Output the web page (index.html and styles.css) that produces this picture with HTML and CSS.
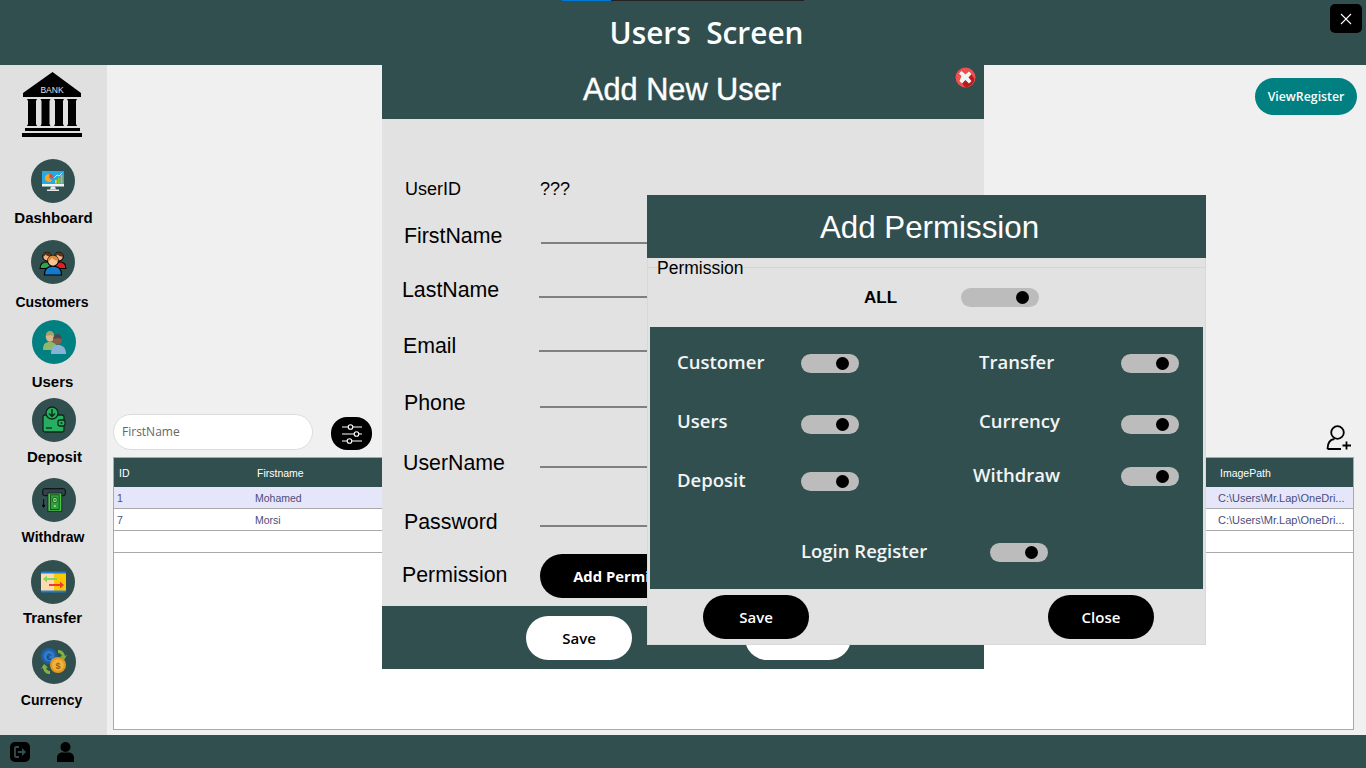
FILE: index.html
```html
<!DOCTYPE html>
<html lang="en">
<head>
<meta charset="utf-8">
<title>Users Screen</title>
<link rel="stylesheet" href="styles.css">
</head>
<body>
<div class="app">
  <header class="topbar">
    <div class="progress"><span class="progress-fill"></span></div>
    <h1 class="screen-title">Users&nbsp; Screen</h1>
    <button class="close-app" aria-label="Close">
      <svg width="12" height="12" viewBox="0 0 12 12"><path d="M1 1 11 11M11 1 1 11" stroke="#fff" stroke-width="1.1"/></svg>
    </button>
  </header>
  <div class="middle">
    <nav class="sidebar">
      <svg class="logo" width="62" height="66" viewBox="0 0 62 66">
        <path d="M30.500 0 59 21V25H1V21Z" fill="#000"/>
        <path d="M5 27h10l-1 2V52l1 2H5l1-2V29z" fill="#000"/>
        <path d="M18.500 27h10l-1 2V52l1 2h-10l1-2V29z" fill="#000"/>
        <path d="M32 27h10l-1 2V52l1 2H32l1-2V29z" fill="#000"/>
        <path d="M45 27h10l-1 2V52l1 2H45l1-2V29z" fill="#000"/>
        <rect x="3" y="56" width="55" height="3" fill="#000"/><rect y="61" width="60" height="4" fill="#000"/>
        <text x="30" y="21" class="logo-text" text-anchor="middle">BANK</text>
      </svg>
      <a class="nav-item nav-dashboard">
        <span class="nav-circle">
          <svg width="24" height="24" viewBox="0 0 24 24"><rect x="1" y="2" width="22" height="15" fill="#29a9e1"/><rect x="1" y="15" width="22" height="2.500" fill="#eef3f5"/><path d="M10 17.500h4l1 3h-6z" fill="#e8e8e8"/><rect x="6" y="20.500" width="12" height="1.500" fill="#e8e8e8"/><path d="M8 5a4 4 0 1 0 3 6.500L8 9z" fill="#f5a623"/><path d="M9 4.500a4 4 0 0 1 3 5l-3-.8z" fill="#e24b3a"/><rect x="14" y="11" width="1.800" height="3.500" fill="#f4d03f"/><rect x="16.800" y="9" width="1.800" height="5.500" fill="#7ed321"/><rect x="19.600" y="6" width="1.800" height="8.500" fill="#f5a623"/><path d="M13 9 16 6l2 1 3-3" stroke="#eaf6fb" fill="none" stroke-width=".8"/></svg>
        </span>
        <span class="nav-label">Dashboard</span>
      </a>
      <a class="nav-item nav-customers">
        <span class="nav-circle">
          <svg width="28" height="28" viewBox="0 0 26 26"><path d="M1 19c0-5 3-6 6-6s5 2 5 6z" fill="#2ea44f" stroke="#000"/><path d="M14 19c0-4 2-6 5-6s6 1 6 6z" fill="#e02020" stroke="#000"/><circle cx="7.500" cy="8" r="4" fill="#f0b184" stroke="#000"/><path d="M3.500 8a4 4 0 0 1 8 0c-2 0-5-1-5-2-1 1-2 2-3 2z" fill="#5c3317"/><circle cx="18.500" cy="8" r="4" fill="#f0b184" stroke="#000"/><path d="M14.500 8a4 4 0 0 1 8 0c-2 0-5-1-5-2-1 1-2 2-3 2z" fill="#5c3317"/><path d="M5 25c0-6 3-8 8-8s8 2 8 8z" fill="#1479c9" stroke="#000"/><circle cx="13" cy="12" r="5" fill="#f7c39a" stroke="#000"/><path d="M8 12a5 5 0 0 1 10 0c-2-.500-5-1-6-3-1 1.500-2 3-4 3z" fill="#d98a3a"/></svg>
        </span>
        <span class="nav-label">Customers</span>
      </a>
      <a class="nav-item nav-users">
        <span class="nav-circle nav-circle-active">
          <svg width="26" height="26" viewBox="0 0 26 26"><path d="M2 21c0-6 2-8 7-8s7 2 7 8z" fill="#8fb86a"/><ellipse cx="9" cy="7.500" rx="4.200" ry="5.200" fill="#d9b48c"/><path d="M4.800 7c0-3 2-5 4.200-5s4.200 2 4.200 5c-2-1-6-1-8.400 0z" fill="#a5a265"/><path d="M10 25c0-7 3-9 7-9s8 2 8 9z" fill="#86b3d6"/><ellipse cx="16.500" cy="10.500" rx="4.300" ry="5.300" fill="#8a5f45"/><path d="M12.200 10c0-3 2-5 4.300-5s4.300 2 4.300 5c-2-1-6.500-1-8.600 0z" fill="#4a4a4a"/></svg>
        </span>
        <span class="nav-label">Users</span>
      </a>
      <a class="nav-item nav-deposit">
        <span class="nav-circle">
          <svg width="24" height="28" viewBox="0 0 24 28"><rect x="1" y="9" width="21" height="17" rx="2" fill="#27ae60" stroke="#0b2a18" stroke-width="1.300"/><circle cx="10" cy="7" r="6" fill="#27ae60" stroke="#0b2a18" stroke-width="1.300"/><path d="M10 3v7M7 7.500l3 3 3-3" fill="none" stroke="#0b2a18" stroke-width="1.400"/><rect x="16" y="14" width="7" height="6" rx="2" fill="#27ae60" stroke="#0b2a18" stroke-width="1.300"/><circle cx="19.500" cy="17" r="1" fill="#0b2a18"/><path d="M4 22h6" stroke="#0b2a18" stroke-width="1.300"/></svg>
        </span>
        <span class="nav-label">Deposit</span>
      </a>
      <a class="nav-item nav-withdraw">
        <span class="nav-circle">
          <svg width="28" height="26" viewBox="0 0 28 30"><rect x="1" y="2" width="26" height="8" rx="2" fill="#33414a" stroke="#000"/><rect x="7" y="7" width="16" height="21" fill="#49c749" stroke="#0b2a18"/><rect x="10" y="9" width="10" height="17" fill="#2f9e3f" stroke="#0b2a18" stroke-width=".8"/><circle cx="15" cy="15" r="3" fill="#8ee86c" stroke="#0b2a18" stroke-width=".8"/><path d="M13.500 15h3" stroke="#0b2a18"/><circle cx="15" cy="22" r="1.300" fill="#8ee86c"/><path d="M2 14v9M0.500 21 2 23.500 3.500 21z" stroke="#000" fill="#000"/></svg>
        </span>
        <span class="nav-label">Withdraw</span>
      </a>
      <a class="nav-item nav-transfer">
        <span class="nav-circle">
          <svg width="26" height="24" viewBox="0 0 26 22"><rect x="1" y="0.500" width="15" height="21" rx="1" fill="#1f7fd1"/><rect x="1" y="2.500" width="15" height="17" fill="#ffd9b0"/><rect x="14" y="0.500" width="12" height="21" rx="1" fill="#1f7fd1"/><rect x="14" y="2.500" width="12" height="17" fill="#ffc800"/><path d="M17 7H7V4.500L3 8l4 3.500V9h10z" fill="#7ed957"/><path d="M9 13h11v-2.500l4 3.500-4 3.500V15H9z" fill="#f03a2e"/></svg>
        </span>
        <span class="nav-label">Transfer</span>
      </a>
      <a class="nav-item nav-currency">
        <span class="nav-circle">
          <svg width="30" height="30" viewBox="0 0 30 30"><path d="M19 3c4 0 6 2 7 6l2-1-3 5-4-3.500 2-.5c-1-2-2-3-4-3z" fill="#7cb342"/><path d="M11 27c-4 0-6-2-7-6l-2 1 3-5 4 3.500-2 .5c1 2 2 3 4 3z" fill="#7cb342"/><circle cx="10" cy="9" r="8" fill="#1f5fa8"/><circle cx="10" cy="9" r="5.500" fill="#2f7ac9"/><text x="10" y="12.500" class="coin-text coin-blue" text-anchor="middle">€</text><circle cx="19" cy="18" r="8" fill="#e09a1f"/><circle cx="19" cy="18" r="5.800" fill="#f3b23a"/><text x="19" y="21.500" class="coin-text coin-brown" text-anchor="middle">$</text></svg>
        </span>
        <span class="nav-label">Currency</span>
      </a>
    </nav>
    <main class="content">
      <div class="content-top">
        <button class="view-register">ViewRegister</button>
      </div>
      <div class="toolbar">
        <div class="search">FirstName</div>
        <button class="filter" aria-label="Filter">
          <svg width="22" height="22" viewBox="0 0 22 22" fill="none" stroke="#fff" stroke-width="1.100"><path d="M1 4h6M12 4h9M1 11h12M18 11h3M1 18h5M11 18h10"/><circle cx="9.500" cy="4" r="2.300"/><circle cx="15.500" cy="11" r="2.300"/><circle cx="8.500" cy="18" r="2.300"/></svg>
        </button>
        <svg class="add-user" width="26" height="26" viewBox="0 0 26 26" fill="none" stroke="#000" stroke-width="1.800"><circle cx="11.500" cy="7.500" r="6.300"/><path d="M1.500 24c0-6 3-9.500 7-10M1.500 24H15M20.500 16.500v8M16.500 20.500h8.500"/></svg>
      </div>
      <div class="grid">
        <div class="grid-row grid-head"><span class="col-id">ID</span><span class="col-first">Firstname</span><span class="col-path">ImagePath</span></div>
        <div class="grid-row grid-selected"><span class="col-id">1</span><span class="col-first">Mohamed</span><span class="col-path">C:\Users\Mr.Lap\OneDri...</span></div>
        <div class="grid-row"><span class="col-id">7</span><span class="col-first">Morsi</span><span class="col-path">C:\Users\Mr.Lap\OneDri...</span></div>
        <div class="grid-row"></div>
      </div>
    </main>
  </div>
  <footer class="bottombar">
    <span class="logout">
      <svg width="20" height="20" viewBox="0 0 20 20"><rect width="20" height="20" rx="5" fill="#000"/><path d="M9 5H6a1 1 0 0 0-1 1v8a1 1 0 0 0 1 1h3" fill="none" stroke="#324f4f" stroke-width="1.800"/><path d="M8 9h4V6l4 4-4 4v-3H8z" fill="#324f4f"/></svg>
    </span>
    <svg class="person" width="17" height="20" viewBox="0 0 17 20"><circle cx="8.500" cy="5" r="5" fill="#000"/><path d="M0 20v-4c0-4 3-5.500 5-5.500h7c2 0 5 1.500 5 5.500v4z" fill="#000"/></svg>
  </footer>

  <section class="modal user-modal">
    <div class="user-head">
      <h2 class="modal-title user-title">Add New User</h2>
      <svg class="modal-x" width="21" height="21" viewBox="0 0 21 21"><circle cx="10.500" cy="10.500" r="10" fill="#ee4f4f"/><path d="M6 15 15.500 6l4 6a10 10 0 0 1-9 8.500z" fill="#b71c1c"/><path d="M6.500 9 4 6.500l2.500-2.500L10.500 7.500 14 4.500l2.500 2.500-3 3.500 3 3.500-2.500 2.500-3.500-3.500-3.500 3.500-2.500-2.500z" fill="#f4f4f4"/></svg>
    </div>
    <div class="user-body">
      <div class="form-row row-id"><span class="label-small">UserID</span><span class="value">???</span></div>
      <div class="form-row row-first"><span class="label">FirstName</span><span class="field"></span></div>
      <div class="form-row row-last"><span class="label">LastName</span><span class="field"></span></div>
      <div class="form-row row-email"><span class="label">Email</span><span class="field"></span></div>
      <div class="form-row row-phone"><span class="label">Phone</span><span class="field"></span></div>
      <div class="form-row row-username"><span class="label">UserName</span><span class="field"></span></div>
      <div class="form-row row-password"><span class="label">Password</span><span class="field"></span></div>
      <div class="form-row row-perm"><span class="label">Permission</span><button class="pill pill-black pill-perm">Add Permission</button></div>
    </div>
    <div class="user-foot">
      <button class="pill pill-white">Save</button>
      <button class="pill pill-white">Close</button>
    </div>
  </section>

  <section class="modal perm-modal">
    <div class="perm-head"><h2 class="modal-title">Add Permission</h2></div>
    <div class="perm-group">
      <span class="group-legend">Permission</span>
      <div class="all-row"><span class="all-label">ALL</span><span class="toggle toggle-wide"><i class="knob"></i></span></div>
      <div class="perm-panel">
        <div class="perm-item item-left"><span class="perm-label">Customer</span><span class="toggle"><i class="knob"></i></span></div>
        <div class="perm-item item-right"><span class="perm-label">Transfer</span><span class="toggle"><i class="knob"></i></span></div>
        <div class="perm-item item-left item-up"><span class="perm-label">Users</span><span class="toggle"><i class="knob"></i></span></div>
        <div class="perm-item item-right item-up"><span class="perm-label">Currency</span><span class="toggle"><i class="knob"></i></span></div>
        <div class="perm-item item-left"><span class="perm-label">Deposit</span><span class="toggle"><i class="knob"></i></span></div>
        <div class="perm-item item-right item-withdraw"><span class="perm-label">Withdraw</span><span class="toggle"><i class="knob"></i></span></div>
        <div class="perm-item item-login"><span class="perm-label">Login Register</span><span class="toggle"><i class="knob"></i></span></div>
      </div>
      <div class="perm-foot">
        <button class="pill pill-black">Save</button>
        <button class="pill pill-black">Close</button>
      </div>
    </div>
  </section>
</div>
</body>
</html>
```

FILE: styles.css
```css
* { box-sizing: border-box; }
html, body { margin: 0; padding: 0; }
body { width: 1366px; height: 768px; overflow: hidden; font-family: "Liberation Sans", Arial, sans-serif; background: #f0f0f0; }
button { border: 0; padding: 0; font: inherit; }
h1, h2 { margin: 0; }

.app { position: relative; width: 1366px; height: 768px; display: flex; flex-direction: column; }

.topbar { height: 65px; background: #324f4f; display: flex; justify-content: center; flex: none; position: relative; padding-left: 47px; }
.progress { position: absolute; left: 562px; top: 0; width: 242px; height: 1px; background: #222; }
.progress-fill { display: block; width: 49px; height: 1px; background: #0078d7; }
.screen-title { font: 600 29.800px/65px "Open Sans", "Noto Sans", sans-serif; color: #fff; }
.close-app { position: absolute; left: 1330px; top: 4px; width: 32px; height: 29px; border-radius: 5px; background: #000; display: flex; align-items: center; justify-content: center; }

.middle { flex: 1; display: flex; min-height: 0; }

.sidebar { width: 107px; flex: none; background: #e0e0e0; display: flex; flex-direction: column; align-items: center; }
.logo { margin-top: 7px; margin-left: -1px; flex: none; }
.logo-text { font: 8.500px "Liberation Sans", sans-serif; fill: #e0e0e0; }
.nav-item { display: flex; flex-direction: column; align-items: center; }
.nav-circle { width: 44px; height: 44px; border-radius: 50%; background: #324f4f; display: flex; align-items: center; justify-content: center; flex: none; }
.nav-circle-active { background: #008080; }
.nav-label { font: 700 15px/17px "Liberation Sans", sans-serif; color: #000; white-space: nowrap; }
.coin-text { font: 700 9px "Liberation Sans", sans-serif; }
.coin-blue { fill: #17467d; }
.coin-brown { fill: #9a5f10; }

.nav-dashboard { margin-top: 21px; }
.nav-dashboard .nav-label { margin-top: 6px; }
.nav-customers { margin-top: 14px; margin-left: -3px; }
.nav-customers .nav-circle { margin-left: 3px; }
.nav-customers .nav-label { margin-top: 10px; font-size: 14px; }
.nav-users { margin-top: 9px; margin-left: -2px; }
.nav-users .nav-circle { margin-left: 2px; }
.nav-users .nav-label { margin-top: 9px; }
.nav-deposit { margin-top: 8px; margin-left: 2px; }
.nav-deposit .nav-label { margin-top: 6px; }
.nav-withdraw { margin-top: 13px; margin-left: -1px; }
.nav-withdraw .nav-circle { margin-left: 1px; }
.nav-withdraw .nav-label { margin-top: 7px; font-size: 14px; }
.nav-transfer { margin-top: 14px; margin-left: -2px; }
.nav-transfer .nav-circle { margin-left: 2px; }
.nav-transfer .nav-label { margin-top: 5px; }
.nav-currency { margin-top: 14px; margin-left: -4px; }
.nav-currency .nav-circle { margin-left: 4px; }
.nav-currency .nav-label { margin-top: 8px; font-size: 14px; }

.content { flex: 1; display: flex; flex-direction: column; padding: 0 12px 5px 6px; min-width: 0; }
.content-top { height: 349px; display: flex; justify-content: flex-end; align-items: flex-start; padding-top: 13px; flex: none; }
.view-register { width: 102px; height: 37px; margin-right: -3px; border-radius: 19px; background: #008080; color: #fff; font: 600 12.300px "Open Sans", "Noto Sans", sans-serif; }
.toolbar { height: 43px; display: flex; align-items: flex-start; flex: none; }
.search { width: 200px; height: 36px; border: 1px solid #dcdcdc; border-radius: 18px; background: #fff; color: #666; font: 12px/34px "Open Sans", "Noto Sans", sans-serif; padding-left: 8px; }
.filter { width: 41px; height: 33px; margin: 3px 0 0 18px; border-radius: 16px; background: #000; display: flex; align-items: center; justify-content: center; }
.add-user { margin: 11px 2px 0 auto; }

.grid { flex: 1; border: 1px solid #a9a9a9; background: #fff; min-height: 0; }
.grid-row { height: 22px; border-bottom: 1px solid #a9a9a9; font: 10.500px/23px "Liberation Sans", sans-serif; color: #4c4c7a; display: flex; }
.grid-head { height: 29px; background: #324f4f; color: #fff; border: 0; line-height: 30px; }
.grid-selected { background: #e6e6fa; }
.col-id { width: 141px; padding-left: 3px; }
.grid-head .col-id { padding-left: 5px; }
.grid-head .col-first { padding-left: 2px; }
.col-first { flex: 1; }
.col-path { width: 135px; font-size: 11px; white-space: nowrap; }
.grid-head .col-path { padding-left: 2px; font-size: 10.500px; }

.bottombar { height: 33px; background: #324f4f; flex: none; display: flex; align-items: center; padding-left: 10px; }
.logout { display: flex; }
.person { margin-left: 27px; }

.modal { position: absolute; display: flex; flex-direction: column; }
.modal-title { font: 400 31.300px "Liberation Sans", sans-serif; color: #fff; text-align: center; }
.user-title { font-size: 30.700px; -webkit-text-stroke: .4px #fff; }

.user-modal { left: 382px; top: 65px; width: 602px; height: 604px; background: #e2e2e2; }
.user-head { height: 54px; flex: none; background: #324f4f; position: relative; display: flex; align-items: center; justify-content: center; padding: 0 2px 4px 0; }
.modal-x { position: absolute; right: 8px; top: 2px; }
.user-body { flex: 1; display: flex; flex-direction: column; min-height: 0; overflow: hidden; }
.form-row { display: flex; flex: none; align-items: flex-start; }
.label { font: 21.330px/26px "Liberation Sans", sans-serif; color: #000; white-space: nowrap; }
.label-small { font: 18px/20px "Liberation Sans", sans-serif; color: #000; width: 135px; }
.value { font: 18px/20px "Liberation Sans", sans-serif; color: #000; }
.field { height: 2px; background: #808080; width: 420px; position: absolute; left: 159px; margin-top: 19px; }
.row-id { margin: 60px 0 0 23px; }
.row-first { margin: 24px 0 0 22px; height: 24px; }
.row-last { margin: 30px 0 0 20px; height: 24px; }
.row-email { margin: 32px 0 0 21px; height: 24px; }
.row-phone { margin: 33px 0 0 22px; height: 24px; }
.row-username { margin: 36px 0 0 21px; height: 24px; }
.row-password { margin: 35px 0 0 22px; height: 24px; }
.row-perm { margin: 21px 0 0 20px; align-items: center; }
.row-perm .label { margin-top: -3px; }
.row-last .field, .row-email .field { left: 157px; }
.row-email .field { margin-top: 17px; }
.row-phone .field { left: 158px; margin-top: 16px; }
.row-username .field { left: 158px; margin-top: 16px; }
.row-password .field { left: 158px; margin-top: 16px; }
.pill { width: 106px; height: 44px; border-radius: 22px; font: 600 15px "Open Sans", "Noto Sans", sans-serif; flex: none; }
.pill-black { background: #000; color: #fff; }
.pill-white { background: #fff; color: #000; }
.pill-perm { width: 182px; margin-left: 32px; font: 700 14.800px "Open Sans", "Noto Sans", sans-serif; }
.user-foot { height: 63px; flex: none; background: #324f4f; display: flex; gap: 113px; padding: 10px 0 0 144px; }

.perm-modal { left: 647px; top: 195px; width: 559px; height: 450px; background: #e2e2e2; box-shadow: 0 0 0 1px #d8d8d8 inset; }
.perm-head { height: 63px; flex: none; background: #324f4f; display: flex; align-items: center; justify-content: center; padding: 3px 0 0 6px; }
.perm-group { position: relative; flex: 1; margin-top: 9px; border-top: 1px solid #d4d4d4; display: flex; flex-direction: column; min-height: 0; }
.group-legend { position: absolute; left: 10px; top: -9px; font: 17.500px/18px "Liberation Sans", sans-serif; color: #000; }
.all-row { height: 59px; flex: none; display: flex; align-items: center; padding: 0 0 0 217px; }
.all-label { font: 700 17px "Liberation Sans", sans-serif; color: #000; width: 97px; }
.perm-panel { height: 262px; flex: none; margin: 0 3px; background: #324f4f; display: grid; grid-template-columns: 302px 1fr; grid-template-rows: 61px 57px 71px 1fr; padding-top: 27px; }
.perm-item { display: flex; align-items: center; height: 19px; }
.perm-label { font: 600 18.500px/19px "Open Sans", "Noto Sans", sans-serif; color: #f2f5f5; white-space: nowrap; margin-bottom: 4px; }
.item-left { padding-left: 27px; justify-content: space-between; width: 209px; }
.item-right { padding-left: 27px; justify-content: space-between; width: 227px; }
.item-up .perm-label { margin-bottom: 8px; }
.item-withdraw { padding-left: 21px; margin-top: -5px; }
.item-login { grid-column: 1 / -1; padding-left: 151px; }
.item-login .perm-label { width: 189px; }
.toggle { width: 58px; height: 19px; border-radius: 10px; background: #bcbcbc; display: flex; align-items: center; justify-content: flex-end; padding-right: 10px; flex: none; }
.toggle-wide { width: 78px; }
.knob { display: block; width: 13px; height: 13px; border-radius: 50%; background: #000; }
.perm-foot { flex: 1; display: flex; justify-content: space-between; padding: 6px 52px 0 56px; }
```
